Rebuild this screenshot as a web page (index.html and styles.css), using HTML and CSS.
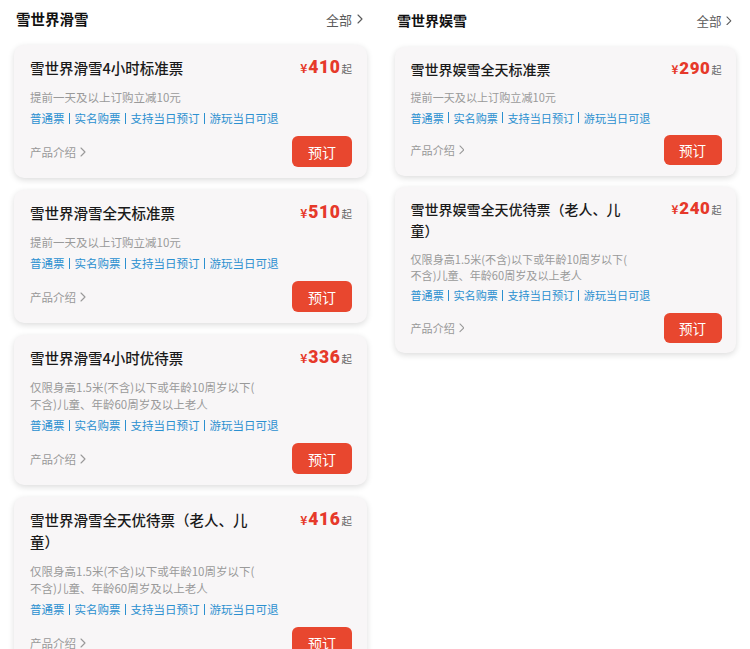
FILE: index.html
```html
<!DOCTYPE html>
<html lang="zh-CN">
<head>
<meta charset="utf-8">
<title>雪世界门票</title>
<link rel="stylesheet" href="styles.css">
</head>
<body>
<div class="page">
  <section class="col col--left">
    <div class="col-head">
      <h2 class="col-title">雪世界滑雪</h2>
      <a class="more">全部<svg class="chev" viewBox="0 0 6 10"><polyline points="1,1 5,5 1,9"/></svg></a>
    </div>
    <div class="card-list">
      <article class="card">
        <div class="card-top">
          <h3 class="card-title">雪世界滑雪4小时标准票</h3>
          <div class="price"><span class="yen">¥</span><span class="num">410</span><span class="qi">起</span></div>
        </div>
        <p class="card-desc">提前一天及以上订购立减10元</p>
        <p class="card-tags"><span>普通票</span><i class="sep"></i><span>实名购票</span><i class="sep"></i><span>支持当日预订</span><i class="sep"></i><span>游玩当日可退</span></p>
        <div class="card-foot"><span class="intro">产品介绍<svg class="chev" viewBox="0 0 6 10"><polyline points="1,1 5,5 1,9"/></svg></span><button class="book">预订</button></div>
      </article>
      <article class="card">
        <div class="card-top">
          <h3 class="card-title">雪世界滑雪全天标准票</h3>
          <div class="price"><span class="yen">¥</span><span class="num">510</span><span class="qi">起</span></div>
        </div>
        <p class="card-desc">提前一天及以上订购立减10元</p>
        <p class="card-tags"><span>普通票</span><i class="sep"></i><span>实名购票</span><i class="sep"></i><span>支持当日预订</span><i class="sep"></i><span>游玩当日可退</span></p>
        <div class="card-foot"><span class="intro">产品介绍<svg class="chev" viewBox="0 0 6 10"><polyline points="1,1 5,5 1,9"/></svg></span><button class="book">预订</button></div>
      </article>
      <article class="card">
        <div class="card-top">
          <h3 class="card-title">雪世界滑雪4小时优待票</h3>
          <div class="price"><span class="yen">¥</span><span class="num">336</span><span class="qi">起</span></div>
        </div>
        <p class="card-desc">仅限身高1.5米(不含)以下或年龄10周岁以下(不含)儿童、年龄60周岁及以上老人</p>
        <p class="card-tags"><span>普通票</span><i class="sep"></i><span>实名购票</span><i class="sep"></i><span>支持当日预订</span><i class="sep"></i><span>游玩当日可退</span></p>
        <div class="card-foot"><span class="intro">产品介绍<svg class="chev" viewBox="0 0 6 10"><polyline points="1,1 5,5 1,9"/></svg></span><button class="book">预订</button></div>
      </article>
      <article class="card">
        <div class="card-top">
          <h3 class="card-title">雪世界滑雪全天优待票（老人、儿童）</h3>
          <div class="price"><span class="yen">¥</span><span class="num">416</span><span class="qi">起</span></div>
        </div>
        <p class="card-desc">仅限身高1.5米(不含)以下或年龄10周岁以下(不含)儿童、年龄60周岁及以上老人</p>
        <p class="card-tags"><span>普通票</span><i class="sep"></i><span>实名购票</span><i class="sep"></i><span>支持当日预订</span><i class="sep"></i><span>游玩当日可退</span></p>
        <div class="card-foot"><span class="intro">产品介绍<svg class="chev" viewBox="0 0 6 10"><polyline points="1,1 5,5 1,9"/></svg></span><button class="book">预订</button></div>
      </article>
    </div>
  </section>

  <section class="col col--right">
    <div class="col-head">
      <h2 class="col-title">雪世界娱雪</h2>
      <a class="more">全部<svg class="chev" viewBox="0 0 6 10"><polyline points="1,1 5,5 1,9"/></svg></a>
    </div>
    <div class="card-list">
      <article class="card">
        <div class="card-top">
          <h3 class="card-title">雪世界娱雪全天标准票</h3>
          <div class="price"><span class="yen">¥</span><span class="num">290</span><span class="qi">起</span></div>
        </div>
        <p class="card-desc">提前一天及以上订购立减10元</p>
        <p class="card-tags"><span>普通票</span><i class="sep"></i><span>实名购票</span><i class="sep"></i><span>支持当日预订</span><i class="sep"></i><span>游玩当日可退</span></p>
        <div class="card-foot"><span class="intro">产品介绍<svg class="chev" viewBox="0 0 6 10"><polyline points="1,1 5,5 1,9"/></svg></span><button class="book">预订</button></div>
      </article>
      <article class="card">
        <div class="card-top">
          <h3 class="card-title">雪世界娱雪全天优待票（老人、儿童）</h3>
          <div class="price"><span class="yen">¥</span><span class="num">240</span><span class="qi">起</span></div>
        </div>
        <p class="card-desc">仅限身高1.5米(不含)以下或年龄10周岁以下(不含)儿童、年龄60周岁及以上老人</p>
        <p class="card-tags"><span>普通票</span><i class="sep"></i><span>实名购票</span><i class="sep"></i><span>支持当日预订</span><i class="sep"></i><span>游玩当日可退</span></p>
        <div class="card-foot"><span class="intro">产品介绍<svg class="chev" viewBox="0 0 6 10"><polyline points="1,1 5,5 1,9"/></svg></span><button class="book">预订</button></div>
      </article>
    </div>
  </section>
</div>
</body>
</html>
```

FILE: styles.css
```css
* { box-sizing: border-box; }

html, body {
  margin: 0;
  padding: 0;
  height: 649px;
  overflow: hidden;
  background: #ffffff;
}

body {
  font-family: "Noto Sans CJK SC", "Noto Sans", sans-serif;
  color: #1c1c1c;
}

.page {
  display: flex;
  align-items: flex-start;
  gap: 28px;
  padding: 0 14px;
}

.col {
  --u: 1px;
  --head-gap: 15px;
  display: flex;
  flex-direction: column;
}

.col--left {
  width: 353px;
  padding-top: 8px;
}

.col--right {
  --u: 0.966px;
  --head-gap: 16px;
  width: 341px;
  padding-top: 10px;
}

.col-head {
  display: flex;
  align-items: center;
  justify-content: space-between;
  height: calc(22 * var(--u));
  padding: 0 calc(4 * var(--u)) 0 calc(2 * var(--u));
  margin-bottom: var(--head-gap);
}

.col-title {
  margin: 0;
  font-size: calc(14.5 * var(--u));
  font-weight: 700;
  color: #111111;
  line-height: calc(22 * var(--u));
}

.more {
  display: flex;
  align-items: center;
  gap: calc(5 * var(--u));
  font-size: calc(13 * var(--u));
  color: #5a5a5a;
}

.chev {
  width: calc(6 * var(--u));
  height: calc(10 * var(--u));
  fill: none;
  stroke: currentColor;
  stroke-width: 1.1;
  stroke-linecap: round;
  stroke-linejoin: round;
}

.card-list {
  display: flex;
  flex-direction: column;
  gap: calc(12 * var(--u));
}

.card {
  background: #f8f6f7;
  border-radius: calc(10 * var(--u));
  box-shadow: 0 2px 6px rgba(0, 0, 0, 0.14);
  padding: calc(12 * var(--u)) calc(15 * var(--u)) calc(11 * var(--u)) calc(16 * var(--u));
}

.card-top {
  display: flex;
  justify-content: space-between;
  align-items: flex-start;
}

.card-title {
  margin: 0;
  max-width: calc(226 * var(--u));
  font-size: calc(14.5 * var(--u));
  line-height: calc(22 * var(--u));
  font-weight: 500;
  color: #1a1a1a;
}

.price {
  display: flex;
  align-items: baseline;
  height: calc(22 * var(--u));
  white-space: nowrap;
  line-height: calc(20 * var(--u));
  color: #e6392a;
  font-weight: 700;
}

.yen {
  font-size: calc(12 * var(--u));
  margin-right: calc(1 * var(--u));
}

.num {
  font-family: Roboto, "Noto Sans", sans-serif;
  font-size: calc(17.5 * var(--u));
  font-weight: 900;
  letter-spacing: calc(0.6 * var(--u));
}

.qi {
  font-size: calc(10.5 * var(--u));
  font-weight: 400;
  color: #666666;
  margin-left: calc(1 * var(--u));
}

.card-desc {
  margin: calc(9.5 * var(--u)) 0 0;
  max-width: calc(228 * var(--u));
  font-size: calc(11.5 * var(--u));
  line-height: calc(17 * var(--u));
  color: #9a9a9a;
  line-break: anywhere;
}

.card-tags {
  margin: calc(4 * var(--u)) 0 0;
  display: flex;
  align-items: center;
  font-size: calc(11.5 * var(--u));
  line-height: calc(17 * var(--u));
  color: #2b90d0;
  white-space: nowrap;
}

.sep {
  display: inline-block;
  width: 1px;
  height: calc(11 * var(--u));
  background: #2b90d0;
  margin: 0 calc(4.5 * var(--u));
}

.card-foot {
  margin-top: calc(9.5 * var(--u));
  display: flex;
  justify-content: space-between;
  align-items: center;
}

.intro {
  display: flex;
  align-items: center;
  gap: calc(4 * var(--u));
  font-size: calc(11.5 * var(--u));
  color: #999999;
}

.book {
  width: calc(60 * var(--u));
  height: calc(31 * var(--u));
  border: none;
  border-radius: calc(6 * var(--u));
  background: #e8472f;
  color: #ffffff;
  font-family: inherit;
  font-size: calc(14 * var(--u));
  padding: 0;
  cursor: pointer;
}
```
